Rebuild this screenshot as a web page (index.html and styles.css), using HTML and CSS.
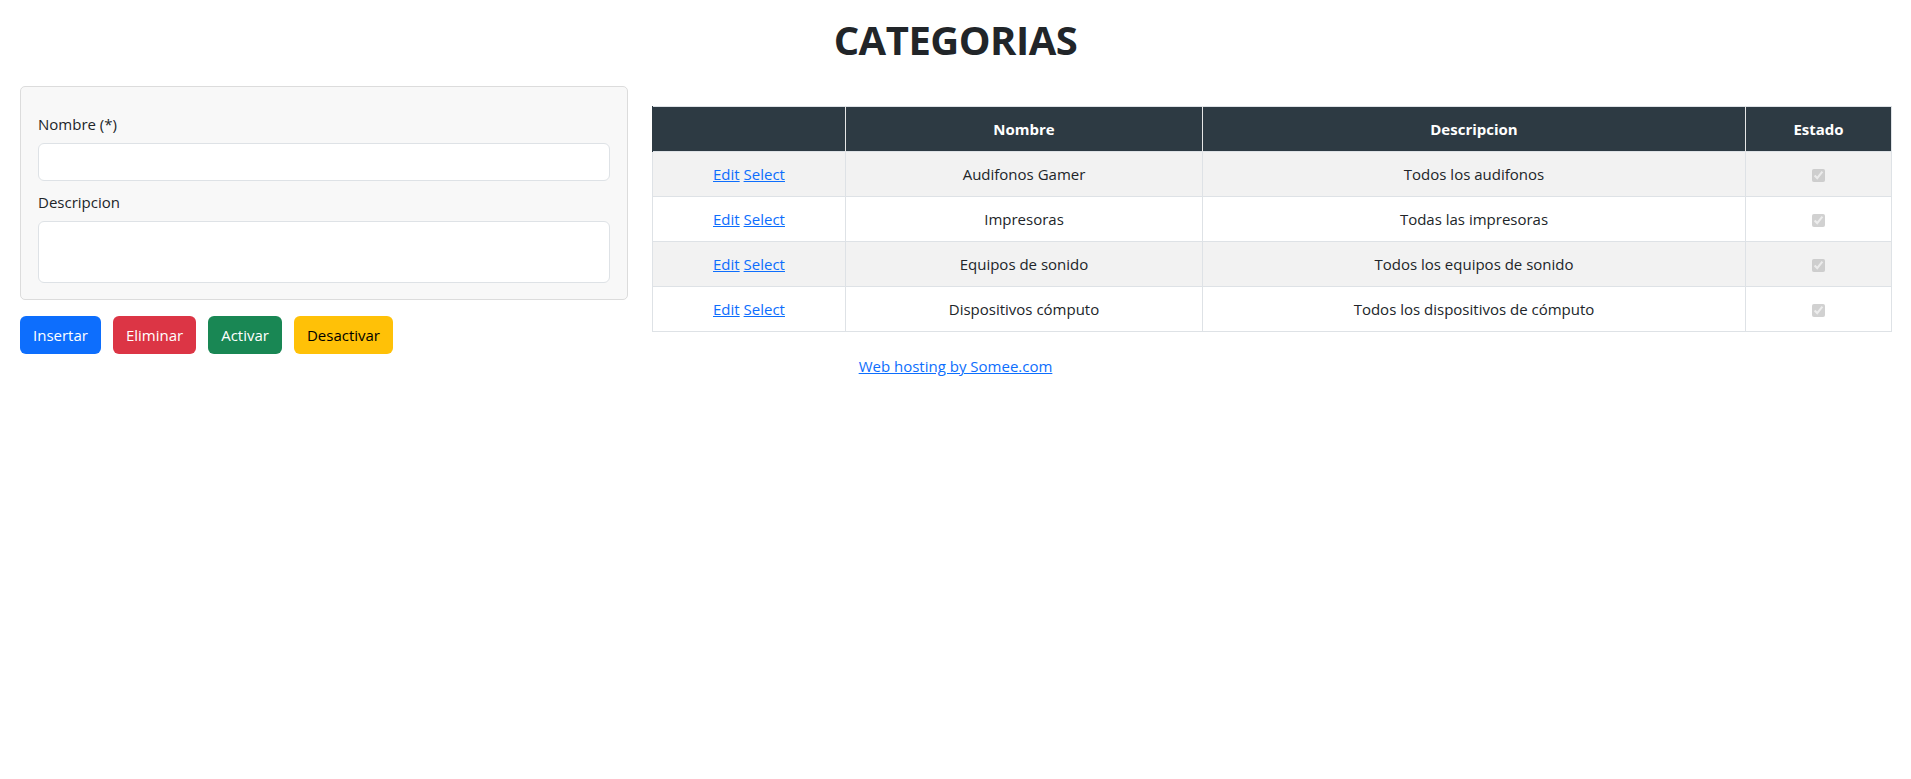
FILE: index.html
```html
<!DOCTYPE html>
<html lang="es">
<head>
<meta charset="utf-8">
<title>Categorias</title>
<link rel="stylesheet" href="styles.css">
</head>
<body>
<h1 class="title">CATEGORIAS</h1>
<div class="main">
  <div class="left">
    <div class="card">
      <label class="label">Nombre (*)</label>
      <input class="control" type="text">
      <label class="label label-second">Descripcion</label>
      <textarea class="control area"></textarea>
    </div>
    <div class="actions">
      <button class="btn btn-blue">Insertar</button>
      <button class="btn btn-red">Eliminar</button>
      <button class="btn btn-green">Activar</button>
      <button class="btn btn-yellow">Desactivar</button>
    </div>
  </div>
  <div class="right">
    <table class="grid">
      <colgroup>
        <col class="c1"><col class="c2"><col class="c3"><col class="c4">
      </colgroup>
      <thead>
        <tr><th></th><th>Nombre</th><th>Descripcion</th><th>Estado</th></tr>
      </thead>
      <tbody>
        <tr class="odd"><td><a href="#">Edit</a> <a href="#">Select</a></td><td>Audifonos Gamer</td><td>Todos los audifonos</td><td><input class="chk" type="checkbox" checked disabled></td></tr>
        <tr><td><a href="#">Edit</a> <a href="#">Select</a></td><td>Impresoras</td><td>Todas las impresoras</td><td><input class="chk" type="checkbox" checked disabled></td></tr>
        <tr class="odd"><td><a href="#">Edit</a> <a href="#">Select</a></td><td>Equipos de sonido</td><td>Todos los equipos de sonido</td><td><input class="chk" type="checkbox" checked disabled></td></tr>
        <tr><td><a href="#">Edit</a> <a href="#">Select</a></td><td>Dispositivos cómputo</td><td>Todos los dispositivos de cómputo</td><td><input class="chk" type="checkbox" checked disabled></td></tr>
      </tbody>
    </table>
  </div>
</div>
<div class="footer"><a href="#">Web hosting by Somee.com</a></div>
</body>
</html>
```
FILE: styles.css
```css
* { box-sizing: border-box; }
body {
  margin: 0;
  font-family: "Open Sans", "Noto Sans", sans-serif;
  font-size: 15px;
  line-height: 24px;
  color: #212529;
  background: #fff;
}
.title {
  margin: 16px 0 22px;
  font-size: 40px;
  line-height: 48px;
  font-weight: 700;
  text-align: center;
  letter-spacing: -0.5px;
}
.main {
  display: flex;
  gap: 24px;
  padding: 0 20px;
  align-items: flex-start;
}
.left { width: 608px; flex: none; }
.right { flex: 1; padding-top: 20px; }
.card {
  background: #f8f8f8;
  border: 1px solid #dcdcdc;
  border-radius: 5px;
  padding: 25px 17px 16px;
  display: flex;
  flex-direction: column;
}
.label { display: block; margin-bottom: 7px; }
.label-second { margin-top: 9px; }
.control {
  display: block;
  width: 100%;
  height: 38px;
  border: 1px solid #dee2e6;
  border-radius: 6px;
  background: #fff;
  font: inherit;
}
.area { height: 62px; resize: none; }
.actions { display: flex; gap: 12px; margin-top: 16px; }
.btn {
  height: 38px;
  padding: 0 13px;
  border: 0;
  border-radius: 6px;
  font: inherit;
  color: #fff;
}
.btn-blue { background: #0d6efd; }
.btn-red { background: #dc3545; }
.btn-green { background: #198754; }
.btn-yellow { background: #ffc107; color: #000; }
.grid {
  width: 100%;
  border-collapse: collapse;
  table-layout: fixed;
  border: 1px solid #dee2e6;
}
.c1 { width: 193px; }
.c2 { width: 357px; }
.c3 { width: 543px; }
.c4 { width: 146px; }
.grid th {
  background: #2d3a43;
  color: #fff;
  font-weight: 700;
  height: 45px;
  border-left: 1px solid #e6e6e6;
  text-align: center;
  padding: 0 8px;
}
.grid th:first-child { border-left: 1px solid #2d3a43; }
.grid td {
  height: 45px;
  text-align: center;
  border: 1px solid #dee2e6;
  padding: 0 8px;
}
.grid tr.odd td { background: #f2f2f2; }
.grid a { color: #0d6efd; }
.chk { margin: 0; vertical-align: middle; width: 13px; height: 13px; }
.footer { text-align: center; margin-top: 0; }
.footer a { color: #0d6efd; }
```
